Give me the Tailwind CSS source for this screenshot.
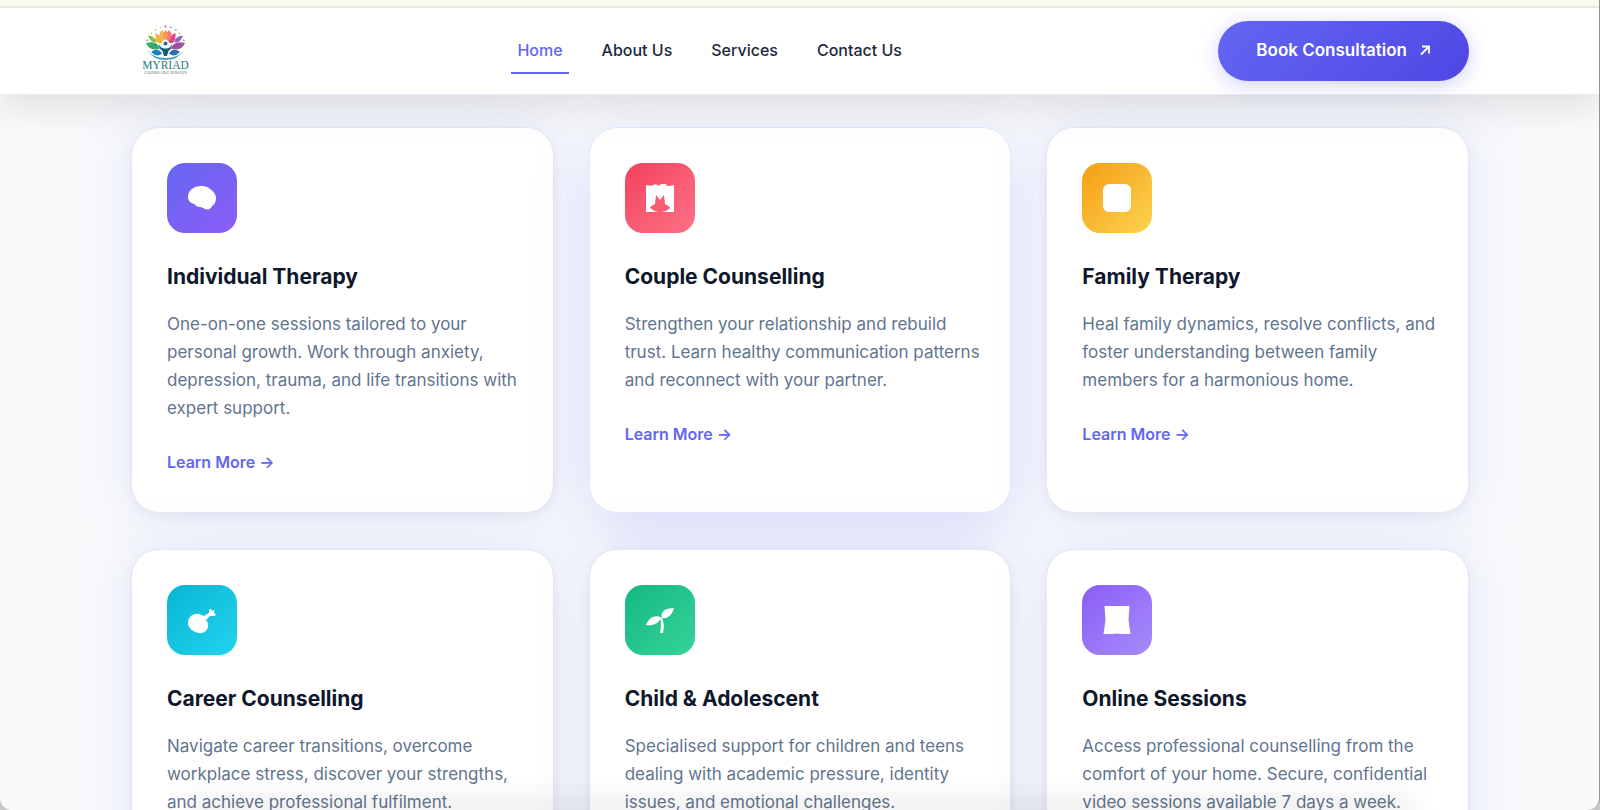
<!DOCTYPE html>
<html lang="en">
<head>
  <meta charset="UTF-8" />
  <meta name="viewport" content="width=device-width, initial-scale=1.0"/>
  <title>Myriad Counselling Services</title>
  <script src="https://cdn.jsdelivr.net/npm/@tailwindcss/browser@4"></script>
</head>
<body class="bg-slate-50 font-['Inter',sans-serif] h-screen overflow-hidden">

  <!-- Top strip -->
  <div class="relative z-30 h-[8px] bg-[#f7faf0] border-b-2 border-[#e6ebdc]"></div>

  <!-- Navbar -->
  <header class="relative z-20 bg-white border-b border-[#ebebf7] shadow-[0_10px_40px_rgba(0,0,0,0.12)]">
    <div class="max-w-[1402px] mx-auto px-8 h-[86px] flex items-center justify-between">
      <a href="#" aria-label="Myriad Counselling Services" class="w-[70px] flex justify-center">
        <svg class="w-[70px] h-[70px]" viewBox="0 0 70 70">
          <!-- dots -->
          <circle cx="20.500" cy="17.500" r=".7" fill="#8bc34a"/>
          <circle cx="24.500" cy="14" r=".9" fill="#d4d65a"/>
          <circle cx="29.500" cy="11.500" r=".8" fill="#f5b942"/>
          <circle cx="34.500" cy="10.500" r="1" fill="#5c7fd6"/>
          <circle cx="39.800" cy="11.500" r=".8" fill="#e0457b"/>
          <circle cx="44.800" cy="14" r=".9" fill="#64b5e6"/>
          <circle cx="48.500" cy="17.500" r=".7" fill="#9c6bc0"/>
          <!-- petals -->
          <path d="M17 19.500Q24 20 26 26Q20 28 17 19.500Z" fill="#8bc34a"/>
          <path d="M52 19.500Q45 20 43 26Q49 28 52 19.500Z" fill="#9268b8"/>
          <path d="M24.500 17Q32 20 31.500 27L27 27Q24 23 24.500 17Z" fill="#f9b33d"/>
          <path d="M44.500 17Q37 20 37.500 27L42 27Q45 23 44.500 17Z" fill="#e0408c"/>
          <path d="M31 14Q25 20 32 26Q37 20 31 14Z" fill="#fbb157"/>
          <path d="M38 14Q44 20 37 26Q32 20 38 14Z" fill="#f27a68"/>
          <path d="M34.500 14Q30 19 34.500 24Q39 19 34.500 14Z" fill="#f6975e"/>
          <path d="M15 27Q26 24 29 32.500Q19 36 15 27Z" fill="#36a96b"/>
          <path d="M54 27Q43 24 40 32.500Q50 36 54 27Z" fill="#a04fa0"/>
          <path d="M20 36Q27 31 31 37.500Q26 42 20 36Z" fill="#1583bd"/>
          <path d="M49 36Q42 31 38 37.500Q43 42 49 36Z" fill="#256fb5"/>
          <path d="M15.500 25L16.800 23.800M53.500 25L52.200 23.800" stroke="#6da76c" stroke-width="1.200"/>
          <!-- person -->
          <circle cx="34.500" cy="27.300" r="3.400" fill="#fff"/>
          <circle cx="34.500" cy="27.500" r="2" fill="#127a86"/>
          <path d="M28 28Q30 33 34.500 32.500Q39 33 41 28Q41 33 37.500 35L36 40H33L31.500 35Q28 33 28 28Z" fill="#125e76"/>
          <path d="M16 34Q22 44 34.500 44T53 34Q47 42 34.500 42T16 34Z" fill="#47a2ad"/>
          <text x="34.500" y="53" text-anchor="middle" font-family="Liberation Serif, serif" font-size="11.500" fill="#1f7a80">MYRIAD</text>
          <text x="34.500" y="57.500" text-anchor="middle" font-family="Inter, sans-serif" font-size="3.500" fill="#6b7280">COUNSELLING SERVICES</text>
        </svg>
      </a>

      <nav>
        <ul class="flex gap-[27px] text-[16px] font-medium text-slate-800">
          <li><a href="#" class="block px-1.5 py-2.5 border-b-2 border-[#6366f1] text-[#6366f1]">Home</a></li>
          <li><a href="#about" class="block px-1.5 py-2.5">About Us</a></li>
          <li><a href="#services" class="block px-1.5 py-2.5">Services</a></li>
          <li><a href="#contact" class="block px-1.5 py-2.5">Contact Us</a></li>
        </ul>
      </nav>

      <button type="button" class="h-[60px] px-[38px] flex items-center gap-3 rounded-full bg-linear-135 from-[#6366f1] to-[#4f46e5] text-white text-[17px] font-semibold shadow-[0_4px_20px_rgba(99,102,241,0.3)]">
        Book Consultation
        <svg class="w-3 h-3" viewBox="0 0 12 12" fill="none" stroke="currentColor" stroke-width="1.800"><path d="M2 9.500L9.500 2M3 1.500H10V8.500"/></svg>
      </button>
    </div>
  </header>

  <!-- Services -->
  <main id="services" class="max-w-[1402px] mx-auto px-8 pt-8">
    <div class="grid grid-cols-3 gap-x-[35px] gap-y-9">

      <article class="bg-white border border-slate-200 rounded-[28px] p-[35px] pr-6 pb-[38px] shadow-[0_4px_12px_rgba(15,23,42,0.05),0_0_60px_rgba(99,102,241,0.12)]">
        <div class="size-[70px] rounded-[18px] bg-linear-135 from-[#6366f1] to-[#8b5cf6] flex items-center justify-center">
          <svg class="size-7" viewBox="0 0 28 28" fill="#fff"><path d="M0 13C0 6 6 2 13 2C18 2 20 3 22 5C25 7 28 10 28 14C28 18 26 21 24 22C23 25 20 26 17 25C15 24 14 23 12 23C9 23 8 22 6 20C3 19 0 17 0 13Z"/></svg>
        </div>
        <h3 class="mt-7 text-[21px] leading-8 font-bold text-slate-900">Individual Therapy</h3>
        <p class="mt-[17px] text-[17px] leading-7 text-slate-500">One-on-one sessions tailored to your personal growth. Work through anxiety, depression, trauma, and life transitions with expert support.</p>
        <a href="#" class="inline-block mt-7 text-[16px] leading-6 font-semibold text-[#6366f1]">Learn More →</a>
      </article>

      <article class="bg-white border border-indigo-100 rounded-[28px] p-[35px] pr-6 pb-[38px] shadow-[0_20px_60px_rgba(99,102,241,0.18)]">
        <div class="size-[70px] rounded-[18px] bg-linear-135 from-[#f43f5e] to-[#fb7185] flex items-center justify-center">
          <svg class="size-7" viewBox="0 0 28 28" fill="#fff"><path d="M0 1C3 2 6 2 8 1Q10 -1 13 2Q15 -1 17 0Q20 -1 21 2Q25 2 28 1V28H16Q24 26 24 23L19 20L18 11L14 16L10 11L9 20L4 23Q5 26 12 28H0Z"/></svg>
        </div>
        <h3 class="mt-7 text-[21px] leading-8 font-bold text-slate-900">Couple Counselling</h3>
        <p class="mt-[17px] text-[17px] leading-7 text-slate-500">Strengthen your relationship and rebuild trust. Learn healthy communication patterns and reconnect with your partner.</p>
        <a href="#" class="inline-block mt-7 text-[16px] leading-6 font-semibold text-[#6366f1]">Learn More →</a>
      </article>

      <article class="bg-white border border-slate-200 rounded-[28px] p-[35px] pr-6 pb-[38px] shadow-[0_4px_12px_rgba(15,23,42,0.05),0_0_60px_rgba(99,102,241,0.12)]">
        <div class="size-[70px] rounded-[18px] bg-linear-135 from-[#f59e0b] to-[#fcd34d] flex items-center justify-center">
          <svg class="size-7" viewBox="0 0 28 28" fill="#fff"><rect width="28" height="28" rx="6"/></svg>
        </div>
        <h3 class="mt-7 text-[21px] leading-8 font-bold text-slate-900">Family Therapy</h3>
        <p class="mt-[17px] text-[17px] leading-7 text-slate-500">Heal family dynamics, resolve conflicts, and foster understanding between family members for a harmonious home.</p>
        <a href="#" class="inline-block mt-7 text-[16px] leading-6 font-semibold text-[#6366f1]">Learn More →</a>
      </article>

      <article class="bg-white border border-slate-200 rounded-[28px] p-[35px] pr-6 pb-[38px] shadow-[0_4px_12px_rgba(15,23,42,0.05),0_0_60px_rgba(99,102,241,0.12)]">
        <div class="size-[70px] rounded-[18px] bg-linear-135 from-[#06b6d4] to-[#22d3ee] flex items-center justify-center">
          <svg class="size-7" viewBox="0 -3 28 28" fill="#fff"><path d="M0 14C0 8 5 4 11 5Q14 6 16 7L21 4V1Q22 -1 24 1V2L26 1Q27 2 26 4Q29 5 27 7L22 7L18 11Q20 13 20 17C20 21 16 25 11 24C5 23 0 19 0 14Z"/></svg>
        </div>
        <h3 class="mt-7 text-[21px] leading-8 font-bold text-slate-900">Career Counselling</h3>
        <p class="mt-[17px] text-[17px] leading-7 text-slate-500">Navigate career transitions, overcome workplace stress, discover your strengths, and achieve professional fulfilment.</p>
        <a href="#" class="inline-block mt-7 text-[16px] leading-6 font-semibold text-[#6366f1]">Learn More →</a>
      </article>

      <article class="bg-white border border-slate-200 rounded-[28px] p-[35px] pr-6 pb-[38px] shadow-[0_4px_12px_rgba(15,23,42,0.05),0_0_60px_rgba(99,102,241,0.12)]">
        <div class="size-[70px] rounded-[18px] bg-linear-135 from-[#10b981] to-[#34d399] flex items-center justify-center">
          <svg class="size-7" viewBox="0 -2 28 28" fill="#fff"><path d="M28 0C19 0 14 4 16 10C10 6 3 9 0 17C7 18 12 16 14 11Q16 16 14 25H17Q19 17 16 10C22 11 26 7 28 0Z"/></svg>
        </div>
        <h3 class="mt-7 text-[21px] leading-8 font-bold text-slate-900">Child &amp; Adolescent</h3>
        <p class="mt-[17px] text-[17px] leading-7 text-slate-500">Specialised support for children and teens dealing with academic pressure, identity issues, and emotional challenges.</p>
        <a href="#" class="inline-block mt-7 text-[16px] leading-6 font-semibold text-[#6366f1]">Learn More →</a>
      </article>

      <article class="bg-white border border-slate-200 rounded-[28px] p-[35px] pr-6 pb-[38px] shadow-[0_4px_12px_rgba(15,23,42,0.05),0_0_60px_rgba(99,102,241,0.12)]">
        <div class="size-[70px] rounded-[18px] bg-linear-135 from-[#8b5cf6] to-[#a78bfa] flex items-center justify-center">
          <svg class="size-7" viewBox="0 0 28 28" fill="#fff"><path d="M1.500 0H26.500L25.500 14L27.500 28H18L14 27.500L10 28H.5L2.500 14Z"/></svg>
        </div>
        <h3 class="mt-7 text-[21px] leading-8 font-bold text-slate-900">Online Sessions</h3>
        <p class="mt-[17px] text-[17px] leading-7 text-slate-500">Access professional counselling from the comfort of your home. Secure, confidential video sessions available 7 days a week.</p>
        <a href="#" class="inline-block mt-7 text-[16px] leading-6 font-semibold text-[#6366f1]">Learn More →</a>
      </article>

    </div>
  </main>

  <!-- Bottom fade and window edge -->
  <div class="fixed inset-x-48 bottom-0 z-30 h-0 shadow-[0_0_30px_4px_rgba(0,0,0,0.22)] pointer-events-none"></div>
  <div class="fixed inset-0 z-40 rounded-b-[12px] border-r border-[#8f9296] shadow-[0_0_0_12px_#c4c6c8] pointer-events-none"></div>

</body>
</html>
